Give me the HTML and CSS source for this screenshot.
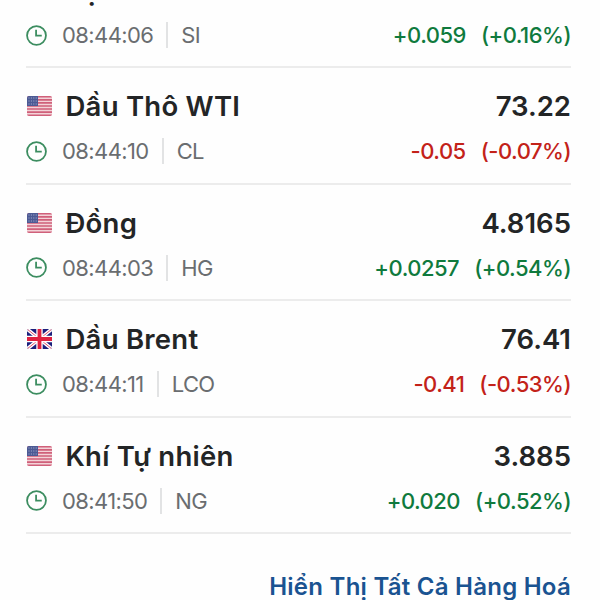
FILE: index.html
```
<!DOCTYPE html>
<html lang="vi">
<head>
	<meta charset="utf-8">
	<title>Hàng Hoá</title>
	<link rel="stylesheet" href="styles.css">
</head>
<body>
	<svg class="defs" width="0" height="0">
		<symbol id="us" viewBox="0 0 25 20">
			<rect width="25" height="20" fill="#f3d3d8"/>
			<path d="M0 .8h25M0 3.86h25M0 6.92h25M0 9.98h25M0 13.04h25M0 16.1h25M0 19.2h25" stroke="#d0607a" stroke-width="1.6"/>
			<rect width="11" height="10" fill="#4c5a94"/>
			<path d="M1.5 2h9M1.5 5h9M1.5 8h9" stroke="#a9b1d2" stroke-width="1" stroke-dasharray="1 1.4"/>
		</symbol>
		<symbol id="gb" viewBox="0 0 25 20">
			<rect width="25" height="20" fill="#1c1f7c"/>
			<path d="M0 0l25 20M25 0L0 20" stroke="#fff" stroke-width="3.6"/>
			<path d="M0 0l25 20M25 0L0 20" stroke="#e0526c" stroke-width="1"/>
			<path d="M12.5 0v20M0 10h25" stroke="#fff" stroke-width="6.4"/>
			<path d="M12.5 0v20M0 10h25" stroke="#e0213f" stroke-width="3.8"/>
		</symbol>
		<symbol id="clock" viewBox="0 0 20 20">
			<circle cx="10" cy="10" r="9" fill="none" stroke="#3c8d60" stroke-width="1.7"/>
			<path d="M9.6 4.6v5.6h5.4" fill="none" stroke="#3c8d60" stroke-width="1.7"/>
		</symbol>
	</svg>

	<div class="quotes">
		<div class="quote">
			<div class="top">
				<svg class="flag"><use href="#us"/></svg>
				<span class="name">Bạc</span>
				<span class="price">36.985</span>
			</div>
			<div class="bottom">
				<svg class="clock"><use href="#clock"/></svg>
				<span class="time">08:44:06</span>
				<span class="symbol">SI</span>
				<span class="change up"><span>+0.059</span><span>(+0.16%)</span></span>
			</div>
		</div>
		<div class="quote">
			<div class="top">
				<svg class="flag"><use href="#us"/></svg>
				<span class="name">Dầu Thô WTI</span>
				<span class="price">73.22</span>
			</div>
			<div class="bottom">
				<svg class="clock"><use href="#clock"/></svg>
				<span class="time">08:44:10</span>
				<span class="symbol">CL</span>
				<span class="change down"><span>-0.05</span><span>(-0.07%)</span></span>
			</div>
		</div>
		<div class="quote">
			<div class="top">
				<svg class="flag"><use href="#us"/></svg>
				<span class="name">Đồng</span>
				<span class="price">4.8165</span>
			</div>
			<div class="bottom">
				<svg class="clock"><use href="#clock"/></svg>
				<span class="time">08:44:03</span>
				<span class="symbol">HG</span>
				<span class="change up"><span>+0.0257</span><span>(+0.54%)</span></span>
			</div>
		</div>
		<div class="quote">
			<div class="top">
				<svg class="flag"><use href="#gb"/></svg>
				<span class="name">Dầu Brent</span>
				<span class="price">76.41</span>
			</div>
			<div class="bottom">
				<svg class="clock"><use href="#clock"/></svg>
				<span class="time">08:44:11</span>
				<span class="symbol">LCO</span>
				<span class="change down"><span>-0.41</span><span>(-0.53%)</span></span>
			</div>
		</div>
		<div class="quote">
			<div class="top">
				<svg class="flag"><use href="#us"/></svg>
				<span class="name">Khí Tự nhiên</span>
				<span class="price">3.885</span>
			</div>
			<div class="bottom">
				<svg class="clock"><use href="#clock"/></svg>
				<span class="time">08:41:50</span>
				<span class="symbol">NG</span>
				<span class="change up"><span>+0.020</span><span>(+0.52%)</span></span>
			</div>
		</div>
	</div>
	<a class="all" href="#">Hiển Thị Tất Cả Hàng Hoá</a>
</body>
</html>
```
FILE: styles.css
```
* {
	box-sizing: border-box;
}
html {
	height: 600px;
	overflow: hidden;
}
body {
	margin: 0;
	height: 600px;
	padding: 0 29px 0 26px;
	overflow: hidden;
	background: #fefefe;
	font-family: Inter, "Liberation Sans", sans-serif;
	color: #232526;
}
.defs {
	display: block;
}
.quotes {
	margin-top: -48px;
}
.quote {
	height: 116.4px;
	padding-top: 20px;
	border-bottom: 2px solid #ececec;
}
.top, .bottom {
	display: flex;
	align-items: center;
}
.top {
	height: 36px;
	line-height: 34px;
	font-size: 27.5px;
	font-weight: 600;
}
.flag {
	width: 25px;
	height: 20px;
	margin-left: 1px;
	margin-right: 13.5px;
	border-radius: 2px;
}
.name {
	letter-spacing: .25px;
}
.price {
	margin-left: auto;
}
.bottom {
	height: 26px;
	margin-top: 14px;
	font-size: 22px;
	letter-spacing: -.6px;
	color: #6a6d70;
}
.clock {
	width: 21px;
	height: 21px;
	margin-right: 15px;
}
.symbol {
	margin-left: 13px;
	padding-left: 13px;
	border-left: 2px solid #e2e3e4;
}
.change {
	display: flex;
	gap: 15px;
	margin-left: auto;
	letter-spacing: -.5px;
	font-weight: 550;
}
.up {
	color: #0f7a3d;
}
.down {
	color: #c32219;
}
.all {
	display: block;
	margin-top: 38px;
	line-height: 30px;
	text-align: right;
	font-size: 24px;
	letter-spacing: .25px;
	font-weight: 600;
	color: #1a5391;
	text-decoration: none;
}
```
